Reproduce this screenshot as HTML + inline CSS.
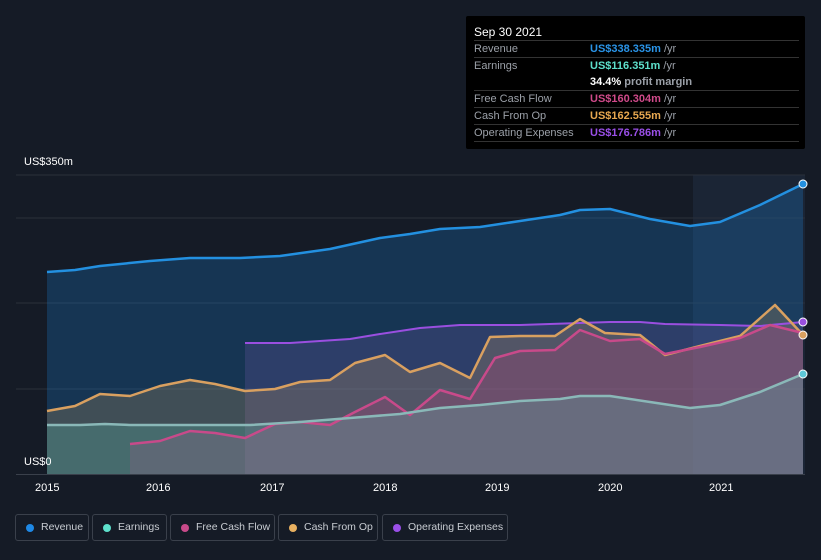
<!DOCTYPE html><html><head><style>
body{margin:0;background:#151b26;width:821px;height:560px;overflow:hidden;font-family:"Liberation Sans",sans-serif;position:relative}
.tt{position:absolute;left:466px;top:16px;width:339px;height:133px;background:#000;border-radius:2px;font-size:11px;color:#9ba0a8}
.tt .h{color:#fff;font-size:12px;position:absolute;left:8px;top:9px}
.row{position:absolute;left:8px;width:325px;height:16px;border-top:1px solid #333}
.row span{position:absolute;left:0;top:2px}.row b{position:absolute;left:116px;top:2px;font-weight:bold}
.leg{position:absolute;top:514px;height:27px;border:1px solid #3a404b;border-radius:3px;color:#c8ccd2;font-size:10.5px;line-height:25px;box-sizing:border-box;white-space:nowrap}
.leg i{position:absolute;left:10px;top:9px;width:8px;height:8px;border-radius:50%}
.leg span{position:absolute;left:25px}
.ax{position:absolute;color:#fff;font-size:11px}
</style></head><body>
<svg width="821" height="560" style="position:absolute;left:0;top:0">
<rect x="693" y="175" width="112" height="299" fill="#1b2535"/>
<g stroke="#2a303b" stroke-width="1"><line x1="16" x2="805" y1="175" y2="175"/><line x1="16" x2="805" y1="218" y2="218"/><line x1="16" x2="805" y1="303" y2="303"/><line x1="16" x2="805" y1="389" y2="389"/></g>
<line x1="16" x2="805" y1="474.5" y2="474.5" stroke="#3a404b"/>
<g fill-opacity="0.24">
<polygon fill="#1e88e5" points="47,474 47,272 75,270 100,266 150,261 190,258 240,258 280,256 330,249 380,238 410,234 440,229 480,227 520,221 560,215 580,210 610,209 650,219 690,226 720,222 760,205 803,184 803,474"/>
<polygon fill="#7b5cb0" points="245,474 245,343 290,343 350,339 380,334 420,328 460,325 520,325 580,323 610,322 640,322 665,324 720,325 760,326 803,322 803,474"/>
<polygon fill="#c8a060" points="47,474 47,411 75,406 100,394 130,396 160,386 190,380 215,384 245,391 275,389 300,382 330,380 355,363 385,355 410,372 440,363 470,378 490,337 520,336 555,336 580,319 605,333 640,335 665,355 700,346 740,336 775,305 803,335 803,474"/>
<polygon fill="#c04080" points="130,474 130,444 160,441 190,431 215,433 245,438 275,424 300,422 330,425 355,412 385,397 410,415 440,390 470,399 495,358 520,351 555,350 580,330 610,341 640,339 665,354 700,347 740,338 770,325 803,333 803,474"/>
<polygon fill="#5ec8b8" points="47,474 47,425 80,425 105,424 130,425 200,425 250,425 300,422 350,418 400,414 440,408 480,405 520,401 560,399 580,396 610,396 650,402 690,408 720,405 760,392 803,374 803,474"/>
</g>
<g fill="none" stroke-width="2.5" stroke-linejoin="round">
<polyline stroke="#9a4fe0" stroke-width="2" points="245,343 290,343 350,339 380,334 420,328 460,325 520,325 580,323 610,322 640,322 665,324 720,325 760,326 803,322"/>
<polyline stroke="#d9a060" points="47,411 75,406 100,394 130,396 160,386 190,380 215,384 245,391 275,389 300,382 330,380 355,363 385,355 410,372 440,363 470,378 490,337 520,336 555,336 580,319 605,333 640,335 665,355 700,346 740,336 775,305 803,335"/>
<polyline stroke="#c84a8a" points="130,444 160,441 190,431 215,433 245,438 275,424 300,422 330,425 355,412 385,397 410,415 440,390 470,399 495,358 520,351 555,350 580,330 610,341 640,339 665,354 700,347 740,338 770,325 803,333"/>
<polyline stroke="#8ab8b8" points="47,425 80,425 105,424 130,425 200,425 250,425 300,422 350,418 400,414 440,408 480,405 520,401 560,399 580,396 610,396 650,402 690,408 720,405 760,392 803,374"/>
<polyline stroke="#2390e0" points="47,272 75,270 100,266 150,261 190,258 240,258 280,256 330,249 380,238 410,234 440,229 480,227 520,221 560,215 580,210 610,209 650,219 690,226 720,222 760,205 803,184"/>
</g>
<circle cx="803" cy="184" r="4" fill="#2390e0" stroke="#fff"/><circle cx="803" cy="374" r="4" fill="#5ec8d8" stroke="#fff"/><circle cx="803" cy="335" r="4" fill="#d9a060" stroke="#fff"/><circle cx="803" cy="322" r="4" fill="#9a4fe0" stroke="#fff"/>
</svg>
<div class="ax" style="left:24px;top:156px">US$350m</div>
<div class="ax" style="left:24px;top:456px">US$0</div>
<div class="ax" style="left:35px;top:482px">2015</div><div class="ax" style="left:146px;top:482px">2016</div><div class="ax" style="left:260px;top:482px">2017</div><div class="ax" style="left:373px;top:482px">2018</div><div class="ax" style="left:485px;top:482px">2019</div><div class="ax" style="left:598px;top:482px">2020</div><div class="ax" style="left:709px;top:482px">2021</div>
<div class="tt"><div class="h">Sep 30 2021</div>
<div class="row" style="top:24px"><span>Revenue</span><b style="color:#2a94e8">US$338.335m <span style="position:static;color:#9ba0a8;font-weight:normal">/yr</span></b></div>
<div class="row" style="top:41px;height:33px"><span>Earnings</span><b style="color:#5ee0cc">US$116.351m <span style="position:static;color:#9ba0a8;font-weight:normal">/yr</span></b><b style="top:18px;color:#fff">34.4% <span style="position:static;color:#9ba0a8">profit margin</span></b></div>
<div class="row" style="top:74px"><span>Free Cash Flow</span><b style="color:#d04a8a">US$160.304m <span style="position:static;color:#9ba0a8;font-weight:normal">/yr</span></b></div>
<div class="row" style="top:91px"><span>Cash From Op</span><b style="color:#e8a850">US$162.555m <span style="position:static;color:#9ba0a8;font-weight:normal">/yr</span></b></div>
<div class="row" style="top:108px;border-bottom:1px solid #333"><span>Operating Expenses</span><b style="color:#9a4fe8">US$176.786m <span style="position:static;color:#9ba0a8;font-weight:normal">/yr</span></b></div>
</div>
<div class="leg" style="left:15px;width:74px"><i style="background:#1e88e5"></i><span>Revenue</span></div>
<div class="leg" style="left:92px;width:75px"><i style="background:#5ee0cc"></i><span>Earnings</span></div>
<div class="leg" style="left:170px;width:105px"><i style="background:#c84a8a"></i><span>Free Cash Flow</span></div>
<div class="leg" style="left:278px;width:100px"><i style="background:#e8b060"></i><span>Cash From Op</span></div>
<div class="leg" style="left:382px;width:126px"><i style="background:#9a4fe8"></i><span>Operating Expenses</span></div>
</body></html>
